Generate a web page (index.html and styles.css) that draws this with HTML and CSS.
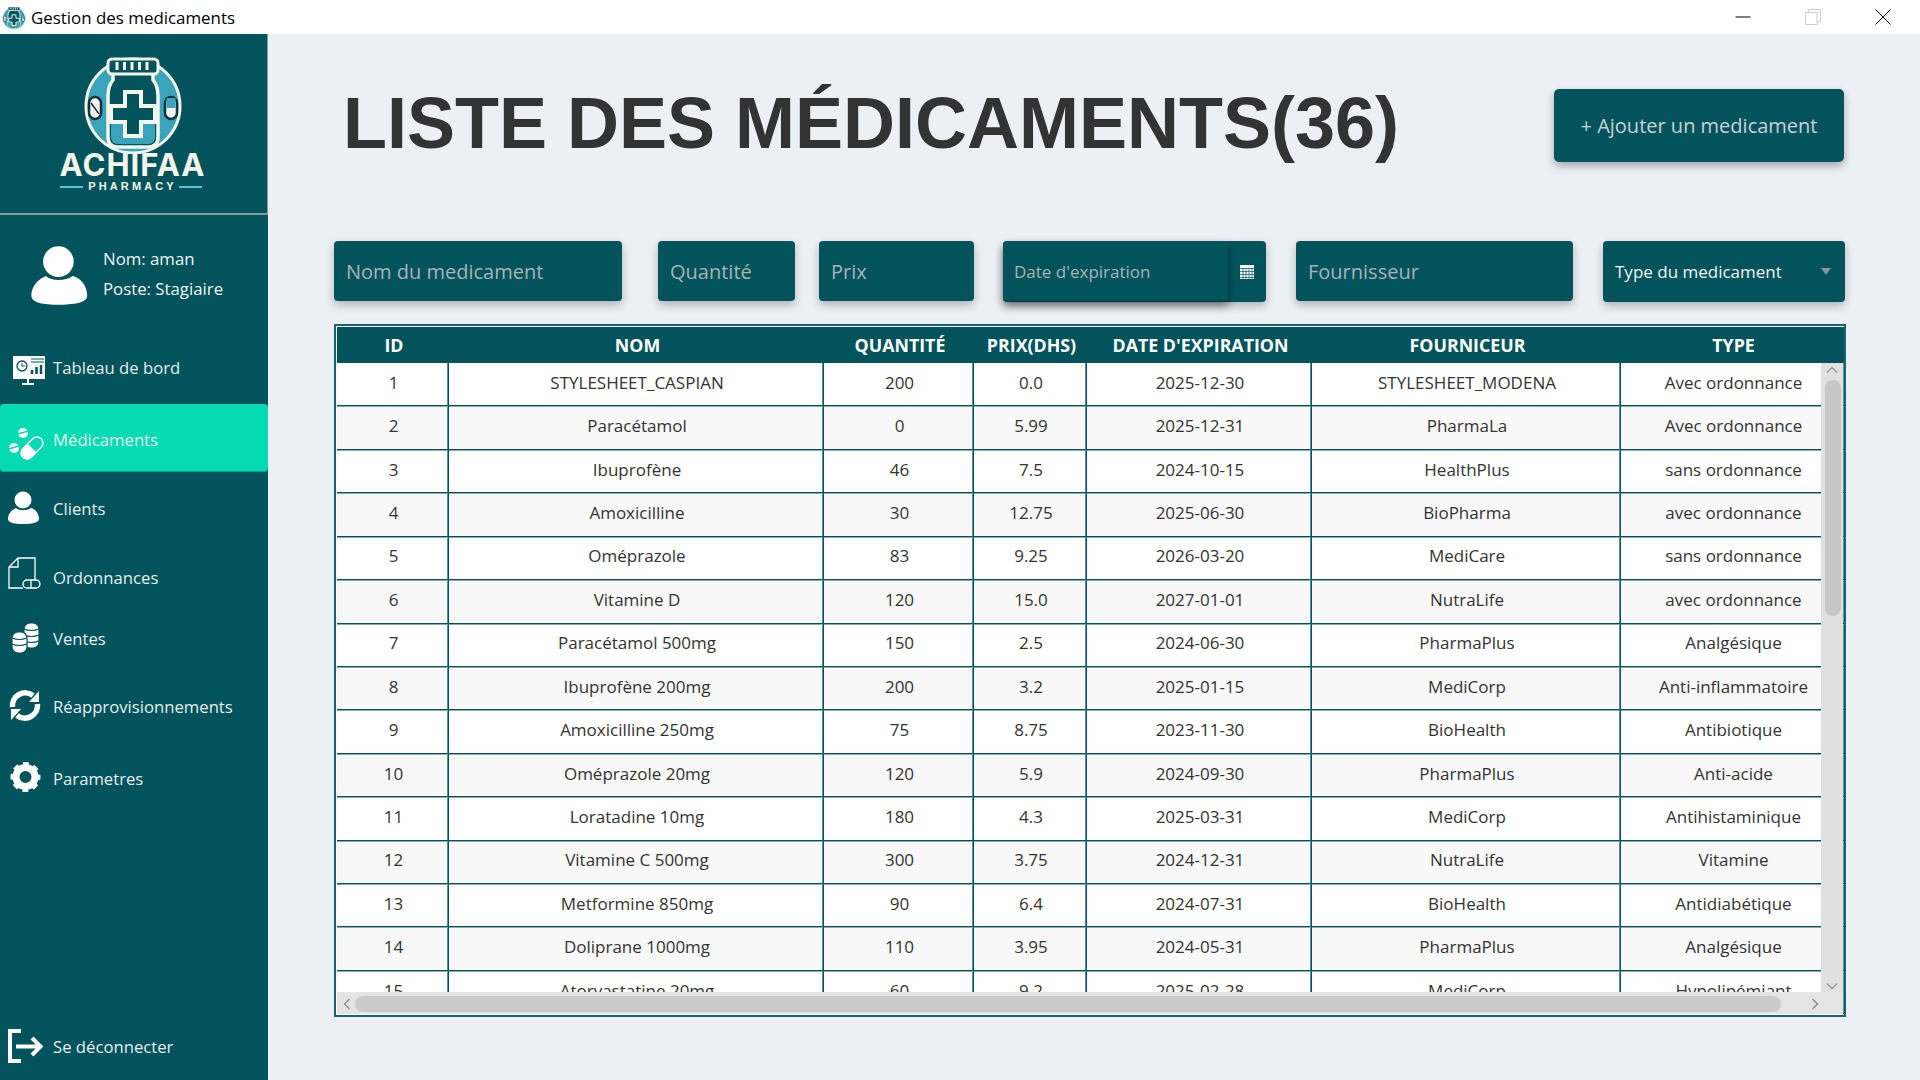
FILE: index.html
```html
<!DOCTYPE html>
<html lang="fr">

<head>
    <meta charset="UTF-8">
    <title>Gestion des medicaments</title>
    <link rel="stylesheet" href="styles.css">
</head>

<body>
    <svg class="defs" width="0" height="0">
        <symbol id="bottle" viewBox="38 12 108 102">
            <circle cx="92" cy="66" r="47" fill="#3ba3bb" stroke="#f4f6ec" stroke-width="3" />
            <path d="M72 33 L72 40 Q67 46 67 56 L67 97 Q67 107 77 107 L107 107 Q117 107 117 97 L117 56 Q117 46 112 40 L112 33 Z" fill="#02535b" stroke="#f4f6ec" stroke-width="3.5" />
            <path d="M70 84 L114 84 L114 97 Q114 104 107 104 L77 104 Q70 104 70 97 Z" fill="#3ba3bb" />
            <rect x="67" y="19" width="50" height="15" rx="4" fill="#02535b" stroke="#f4f6ec" stroke-width="3" />
            <path d="M76 22 v8 M83.500 22 v8 M91 22 v8 M98.500 22 v8 M106 22 v8" stroke="#f4f6ec" stroke-width="3" />
            <path d="M84 52 h16 v14 h14 v16 h-14 v14 h-16 v-14 h-14 v-16 h14 Z" fill="#02535b" stroke="#f4f6ec" stroke-width="4" />
            <rect x="48" y="57" width="12" height="22" rx="6" fill="#f4f6ec" stroke="#14323f" stroke-width="2.500" />
            <path d="M50 63 L58 74" stroke="#14323f" stroke-width="1.500" />
            <rect x="124" y="57" width="12" height="22" rx="6" fill="#f4f6ec" stroke="#14323f" stroke-width="2.500" />
            <path d="M125.500 58 h9 v10 h-9 Z" fill="#3ba3bb" />
        </symbol>
        <symbol id="person" viewBox="0 0 40 40">
            <circle cx="18" cy="12" r="8.500" fill="#fff" />
            <path d="M3 31 C3 24 9 21 11 20 C14 23 22 23 26 20 C30 21 34 25 34 31 C34 35 26 36 18 36 C10 36 3 35 3 31 Z" fill="#fff" />
        </symbol>
    </svg>

    <header class="titlebar">
        <svg class="app-icon" width="26" height="25">
            <use href="#bottle" />
        </svg>
        <span class="app-title">Gestion des medicaments</span>
        <div class="window-controls">
            <div class="window-btn">
                <svg width="16" height="16" viewBox="0 0 16 16">
                    <path d="M0.500 8 H15.500" stroke="#000" stroke-width="1" />
                </svg>
            </div>
            <div class="window-btn">
                <svg width="16" height="16" viewBox="0 0 16 16" fill="none" stroke="#ccc">
                    <rect x="0.500" y="3.500" width="11.500" height="12" />
                    <path d="M3.500 3.500 V0.500 H15.500 V12.500 H12" />
                </svg>
            </div>
            <div class="window-btn">
                <svg width="16" height="16" viewBox="0 0 16 16">
                    <path d="M0.500 0.500 L15.500 15.500 M15.500 0.500 L0.500 15.500" stroke="#000" stroke-width="1" />
                </svg>
            </div>
        </div>
    </header>

    <div class="app">
        <aside class="sidebar">
            <div class="logo">
                <svg class="logo-mark" width="108" height="102">
                    <use href="#bottle" />
                </svg>
                <div class="logo-name">ACHIFAA</div>
                <div class="logo-sub"><span class="logo-line"></span>PHARMACY<span class="logo-line"></span></div>
            </div>

            <div class="profile">
                <svg class="avatar" width="72" height="72">
                    <use href="#person" />
                </svg>
                <div class="profile-info">
                    <div>Nom: aman</div>
                    <div>Poste: Stagiaire</div>
                </div>
            </div>

            <nav class="nav">
                <a class="nav-item">
                    <svg class="nav-icon" viewBox="0 0 40 40">
                        <rect x="8" y="9" width="34" height="23" fill="#fff" />
                        <path d="M23 32 v4 M17 37 h12" stroke="#fff" stroke-width="2" />
                        <circle cx="17" cy="19" r="5" fill="none" stroke="#02535b" stroke-width="1.300" />
                        <path d="M17 16 v3 h3" fill="none" stroke="#02535b" />
                        <path d="M26 12 h13 M26 15 h13" stroke="#02535b" />
                        <path d="M27 27 v-4 M31.500 27 v-7 M36 27 v-9" stroke="#02535b" stroke-width="2.500" />
                    </svg>
                    Tableau de bord
                </a>
                <a class="nav-item active">
                    <svg class="nav-icon" viewBox="0 0 40 40">
                        <g transform="rotate(45 27 28)">
                            <rect x="21" y="15" width="12" height="26" rx="6" fill="none" stroke="#fff" stroke-width="1.500" />
                            <path d="M21 28 h12 v7 a6 6 0 0 1 -12 0 Z" fill="#fff" />
                        </g>
                        <circle cx="18" cy="13" r="5" fill="#fff" />
                        <path d="M13 14 L23 11" stroke="#04dbb3" stroke-width="1.500" />
                        <circle cx="9" cy="28" r="5" fill="#fff" />
                        <path d="M4 29 L14 26" stroke="#04dbb3" stroke-width="1.500" />
                    </svg>
                    Médicaments
                </a>
                <a class="nav-item">
                    <svg class="nav-icon">
                        <use href="#person" />
                    </svg>
                    Clients
                </a>
                <a class="nav-item">
                    <svg class="nav-icon" viewBox="0 0 40 40" fill="none" stroke="#fff" stroke-width="1.300">
                        <path d="M18 31 H4 V10 L13 1 H30 V23" />
                        <path d="M4 10 H13 V1" />
                        <rect x="18" y="23" width="17" height="8" rx="4" />
                        <path d="M26 23 v8" />
                    </svg>
                    Ordonnances
                </a>
                <a class="nav-item">
                    <svg class="nav-icon" viewBox="0 0 40 40" fill="#fff" stroke="#02535b" stroke-width="1.200">
                        <rect x="19" y="5" width="15" height="25" rx="6" />
                        <path d="M19 11 q7 3 15 0 M19 17 q7 3 15 0 M19 23 q7 3 15 0" fill="none" />
                        <rect x="7" y="14" width="15" height="21" rx="6" />
                        <path d="M7 20 q7 3 15 0 M7 26 q7 3 15 0" fill="none" />
                    </svg>
                    Ventes
                </a>
                <a class="nav-item">
                    <svg class="nav-icon" viewBox="0 0 40 40" fill="none" stroke="#fff" stroke-width="5.500">
                        <path d="M7.500 21 A12.800 12.800 0 0 1 28 9.500" />
                        <path d="M32.500 18 A12.800 12.800 0 0 1 12 29.500" />
                        <path d="M24 16 L34 16 L34 5 Z" fill="#fff" stroke="none" />
                        <path d="M16 23 L6 23 L6 34 Z" fill="#fff" stroke="none" />
                    </svg>
                    Réapprovisionnements
                </a>
                <a class="nav-item">
                    <svg class="nav-icon" viewBox="0 0 40 40" fill="none">
                        <circle cx="20.500" cy="19" r="12.500" stroke="#fff" stroke-width="5" stroke-dasharray="5.400 4.420" stroke-dashoffset="2.700" />
                        <circle cx="20.500" cy="19" r="9.500" stroke="#fff" stroke-width="7" />
                    </svg>
                    Parametres
                </a>
            </nav>

            <a class="nav-item logout">
                <svg class="nav-icon" viewBox="0 0 40 40" fill="none" stroke="#fff" stroke-width="4">
                    <path d="M16 5 H5 V35 H16" />
                    <path d="M11 20.500 H35 M27 12 L35.500 20.500 L27 29" />
                </svg>
                Se déconnecter
            </a>
        </aside>

        <main class="content">
            <div class="top-row">
                <h1 class="page-title">LISTE DES MÉDICAMENTS(36)</h1>
                <button class="add-btn">+ Ajouter un medicament</button>
            </div>

            <div class="filters">
                <input class="field f-nom" type="text" placeholder="Nom du medicament">
                <input class="field f-qte" type="text" placeholder="Quantité">
                <input class="field f-prix" type="text" placeholder="Prix">
                <div class="date-picker">
                    <input class="date-input" type="text" placeholder="Date d'expiration">
                    <svg class="cal-icon" width="14" height="14" viewBox="0 0 14 14">
                        <rect width="14" height="14" fill="#fff" />
                        <path d="M0 3.500 H14 M0 6.500 H14 M0 9.500 H14 M0 12.500 H14 M3 3 V14 M6 3 V14 M9 3 V14 M12 3 V14" stroke="#02535b" stroke-width="0.700" />
                    </svg>
                </div>
                <input class="field f-four" type="text" placeholder="Fournisseur">
                <div class="combo">
                    <span>Type du medicament</span>
                    <span class="combo-arrow"></span>
                </div>
            </div>

            <div class="table-frame">
                <table class="med-table">
                    <colgroup>
                        <col class="c-id">
                        <col class="c-nom">
                        <col class="c-qte">
                        <col class="c-prix">
                        <col class="c-date">
                        <col class="c-four">
                        <col class="c-type">
                    </colgroup>
                    <thead>
                        <tr>
                            <th>ID</th>
                            <th>NOM</th>
                            <th>QUANTITÉ</th>
                            <th>PRIX(DHS)</th>
                            <th>DATE D'EXPIRATION</th>
                            <th>FOURNICEUR</th>
                            <th>TYPE</th>
                        </tr>
                    </thead>
                    <tbody>
                        <tr><td>1</td><td>STYLESHEET_CASPIAN</td><td>200</td><td>0.0</td><td>2025-12-30</td><td>STYLESHEET_MODENA</td><td>Avec ordonnance</td></tr>
                        <tr><td>2</td><td>Paracétamol</td><td>0</td><td>5.99</td><td>2025-12-31</td><td>PharmaLa</td><td>Avec ordonnance</td></tr>
                        <tr><td>3</td><td>Ibuprofène</td><td>46</td><td>7.5</td><td>2024-10-15</td><td>HealthPlus</td><td>sans ordonnance</td></tr>
                        <tr><td>4</td><td>Amoxicilline</td><td>30</td><td>12.75</td><td>2025-06-30</td><td>BioPharma</td><td>avec ordonnance</td></tr>
                        <tr><td>5</td><td>Oméprazole</td><td>83</td><td>9.25</td><td>2026-03-20</td><td>MediCare</td><td>sans ordonnance</td></tr>
                        <tr><td>6</td><td>Vitamine D</td><td>120</td><td>15.0</td><td>2027-01-01</td><td>NutraLife</td><td>avec ordonnance</td></tr>
                        <tr><td>7</td><td>Paracétamol 500mg</td><td>150</td><td>2.5</td><td>2024-06-30</td><td>PharmaPlus</td><td>Analgésique</td></tr>
                        <tr><td>8</td><td>Ibuprofène 200mg</td><td>200</td><td>3.2</td><td>2025-01-15</td><td>MediCorp</td><td>Anti-inflammatoire</td></tr>
                        <tr><td>9</td><td>Amoxicilline 250mg</td><td>75</td><td>8.75</td><td>2023-11-30</td><td>BioHealth</td><td>Antibiotique</td></tr>
                        <tr><td>10</td><td>Oméprazole 20mg</td><td>120</td><td>5.9</td><td>2024-09-30</td><td>PharmaPlus</td><td>Anti-acide</td></tr>
                        <tr><td>11</td><td>Loratadine 10mg</td><td>180</td><td>4.3</td><td>2025-03-31</td><td>MediCorp</td><td>Antihistaminique</td></tr>
                        <tr><td>12</td><td>Vitamine C 500mg</td><td>300</td><td>3.75</td><td>2024-12-31</td><td>NutraLife</td><td>Vitamine</td></tr>
                        <tr><td>13</td><td>Metformine 850mg</td><td>90</td><td>6.4</td><td>2024-07-31</td><td>BioHealth</td><td>Antidiabétique</td></tr>
                        <tr><td>14</td><td>Doliprane 1000mg</td><td>110</td><td>3.95</td><td>2024-05-31</td><td>PharmaPlus</td><td>Analgésique</td></tr>
                        <tr><td>15</td><td>Atorvastatine 20mg</td><td>60</td><td>9.2</td><td>2025-02-28</td><td>MediCorp</td><td>Hypolipémiant</td></tr>
                    </tbody>
                </table>

                <!-- scrollbars sit on top of the table -->
                <div class="vscroll">
                    <svg class="v-arrow up" width="12" height="8" viewBox="0 0 12 8">
                        <path d="M1 6.500 L6 1.500 L11 6.500" fill="none" stroke="#999" stroke-width="1.300" />
                    </svg>
                    <div class="v-thumb"></div>
                    <svg class="v-arrow down" width="12" height="8" viewBox="0 0 12 8">
                        <path d="M1 1.500 L6 6.500 L11 1.500" fill="none" stroke="#999" stroke-width="1.300" />
                    </svg>
                </div>
                <div class="hscroll">
                    <svg class="h-arrow" width="8" height="12" viewBox="0 0 8 12">
                        <path d="M6.500 1 L1.500 6 L6.500 11" fill="none" stroke="#888" stroke-width="1.300" />
                    </svg>
                    <div class="h-thumb"></div>
                    <svg class="h-arrow" width="8" height="12" viewBox="0 0 8 12">
                        <path d="M1.500 1 L6.500 6 L1.500 11" fill="none" stroke="#888" stroke-width="1.300" />
                    </svg>
                </div>
            </div>
        </main>
    </div>
</body>

</html>
```

FILE: styles.css
```css
* {
    box-sizing: border-box;
}

body {
    margin: 0;
    height: 1080px;
    overflow: hidden;
    font-family: "Open Sans", "Liberation Sans", sans-serif;
    background-color: #eceff4;
    color: #333;
}

.defs {
    position: absolute;
}

/* window title bar */
.titlebar {
    height: 34px;
    background-color: #fff;
    display: flex;
    align-items: center;
    padding: 0 2px 0 1px;
}

.app-icon {
    margin-right: 4px;
}

.app-title {
    font-size: 16.900px;
    color: #000;
}

.window-controls {
    margin-left: auto;
    display: flex;
}

.window-btn {
    width: 70px;
    height: 34px;
    display: flex;
    align-items: center;
    justify-content: center;
}

.app {
    display: flex;
    height: 1046px;
}

/* sidebar */
.sidebar {
    flex: none;
    width: 268px;
    background-color: #02535b;
    color: #f0f4f4;
    display: flex;
    flex-direction: column;
}

.logo {
    height: 181px;
    border-bottom: 2px solid #7f9ea2;
    border-right: 1px solid #7f9ea2;
    display: flex;
    flex-direction: column;
    align-items: center;
    padding: 18px 2px 0 0;
}

.logo-name {
    font-family: "Inter", "Liberation Sans", sans-serif;
    font-weight: 700;
    font-size: 31px;
    line-height: 25px;
    letter-spacing: 1px;
    color: #f4f6ec;
    margin-top: -2px;
}

.logo-sub {
    display: flex;
    align-items: center;
    margin-top: 4px;
    font-family: "Liberation Sans", sans-serif;
    font-weight: 700;
    font-size: 11px;
    line-height: 11px;
    letter-spacing: 3.100px;
    color: #f4f6ec;
}

.logo-line {
    width: 23px;
    height: 2px;
    background-color: #5cc4d4;
    margin: 0 5px 0 2px;
}

.profile {
    height: 117px;
    display: flex;
    align-items: center;
    padding-left: 26px;
    font-size: 16.800px;
}

.avatar {
    margin-right: 5px;
    margin-top: 5px;
}

.profile-info {
    line-height: 30px;
}

.nav {
    display: grid;
    grid-template-rows: 72px 68px 72px 66px 56px 80px 64px;
}

.nav-item {
    display: flex;
    align-items: center;
    gap: 8px;
    padding-left: 5px;
    font-size: 16.700px;
    color: #e4eeee;
}

.nav-item:first-child {
    padding-bottom: 2px;
}

.nav-item.active {
    background-color: #04dbb3;
    border-radius: 4px;
    border-bottom: 1px solid #02a98f;
    padding-top: 4px;
}

.nav-icon {
    width: 40px;
    height: 40px;
    flex: none;
}

.logout {
    margin-top: auto;
    height: 68px;
}

/* main area */
.content {
    flex: 1;
    min-width: 0;
    padding: 55px 74px 0 66px;
}

.top-row {
    display: flex;
    justify-content: space-between;
    align-items: flex-start;
}

.page-title {
    margin: -2px 0 0 9px;
    font-family: "Liberation Sans", sans-serif;
    font-weight: 700;
    font-size: 72px;
    line-height: 73px;
    color: #333;
}

.add-btn {
    width: 290px;
    height: 73px;
    margin-right: 2px;
    border: none;
    border-radius: 5px;
    background-color: #02535b;
    color: #c6d4d6;
    font-family: inherit;
    font-size: 20px;
    box-shadow: 0 4px 8px rgba(0, 0, 0, 0.3);
}

.filters {
    display: flex;
    align-items: flex-start;
    margin-top: 79px;
}

.field {
    height: 60px;
    padding: 0 12px;
    border: none;
    border-radius: 4px;
    background-color: #02535b;
    font-family: inherit;
    font-size: 20px;
    color: #fff;
    box-shadow: 0 4px 8px rgba(0, 0, 0, 0.25);
}

.field::placeholder,
.date-input::placeholder {
    color: #a8b4b4;
    opacity: 1;
}

.f-nom {
    width: 288px;
}

.f-qte {
    width: 137px;
    margin-left: 36px;
}

.f-prix {
    width: 155px;
    margin-left: 24px;
}

.f-four {
    width: 277px;
    margin-left: 30px;
}

.date-picker {
    width: 263px;
    height: 61px;
    margin-left: 29px;
    border-radius: 4px;
    background-color: #02535b;
    display: flex;
    align-items: center;
    box-shadow: 0 4px 8px rgba(0, 0, 0, 0.25);
}

.date-input {
    width: 225px;
    height: 60px;
    align-self: flex-start;
    padding: 0 11px;
    border: none;
    border-radius: 4px 0 0 4px;
    background-color: #02535b;
    font-family: inherit;
    font-size: 17px;
    box-shadow: 0 5px 8px rgba(0, 0, 0, 0.4);
}

.cal-icon {
    margin-left: 12px;
}

.combo {
    width: 242px;
    height: 61px;
    margin-left: 30px;
    padding: 0 14px 0 12px;
    border-radius: 4px;
    background-color: #02535b;
    color: #f2f4f4;
    font-size: 17px;
    display: flex;
    align-items: center;
    justify-content: space-between;
    box-shadow: 0 4px 8px rgba(0, 0, 0, 0.25);
}

.combo-arrow {
    width: 0;
    height: 0;
    border-left: 5px solid transparent;
    border-right: 5px solid transparent;
    border-top: 7px solid #8a9696;
}

/* table */
.table-frame {
    position: relative;
    height: 693px;
    margin-top: 22px;
    border: 2px solid #1b636a;
    padding: 1px;
    background-color: #fff;
    overflow: hidden;
}

.med-table {
    width: 1507px;
    table-layout: fixed;
    border-collapse: separate;
    border-spacing: 0;
    background-color: #fff;
}

.c-id {
    width: 112px;
}

.c-nom {
    width: 375px;
}

.c-qte {
    width: 150px;
}

.c-prix {
    width: 113px;
}

.c-date {
    width: 225px;
}

.c-four {
    width: 309px;
}

.c-type {
    width: 223px;
}

.med-table th {
    height: 36px;
    padding: 0 0 0 2px;
    background-color: #02535b;
    color: #fff;
    font-size: 17.800px;
    font-weight: 700;
}

.med-table td {
    height: 43.430px;
    padding: 0 0 4px 2px;
    text-align: center;
    font-size: 17px;
    color: #333;
    border-right: 1px solid #02535b;
    border-bottom: 1px solid #02535b;
    box-shadow: inset -1px 0 0 #5b8f94;
    white-space: nowrap;
    overflow: hidden;
}

.med-table tbody tr + tr td {
    box-shadow: inset 0 1px 0 #8aabae, inset -1px 0 0 #5b8f94;
}

.med-table td:last-child {
    border-right: none;
}

.med-table tbody tr:nth-child(even) td {
    background-color: #f8f8f8;
}

.vscroll {
    position: absolute;
    top: 37px;
    right: 1px;
    bottom: 22px;
    width: 22px;
    background-color: #e0e0e0;
}

.v-arrow {
    position: absolute;
    left: 5px;
}

.v-arrow.up {
    top: 3px;
}

.v-arrow.down {
    bottom: 3px;
}

.v-thumb {
    position: absolute;
    top: 17px;
    left: 4px;
    width: 16px;
    height: 236px;
    border-radius: 8px;
    background-color: #c6c6c6;
}

.hscroll {
    position: absolute;
    left: 1px;
    right: 1px;
    bottom: 1px;
    height: 22px;
    background-color: #e4e4e4;
    display: flex;
    align-items: center;
    padding: 1px 24px 0 6px;
}

.h-thumb {
    width: 1426px;
    height: 16px;
    margin: 0 auto 0 4px;
    border-radius: 8px;
    background-color: #cbcbcb;
}
```
